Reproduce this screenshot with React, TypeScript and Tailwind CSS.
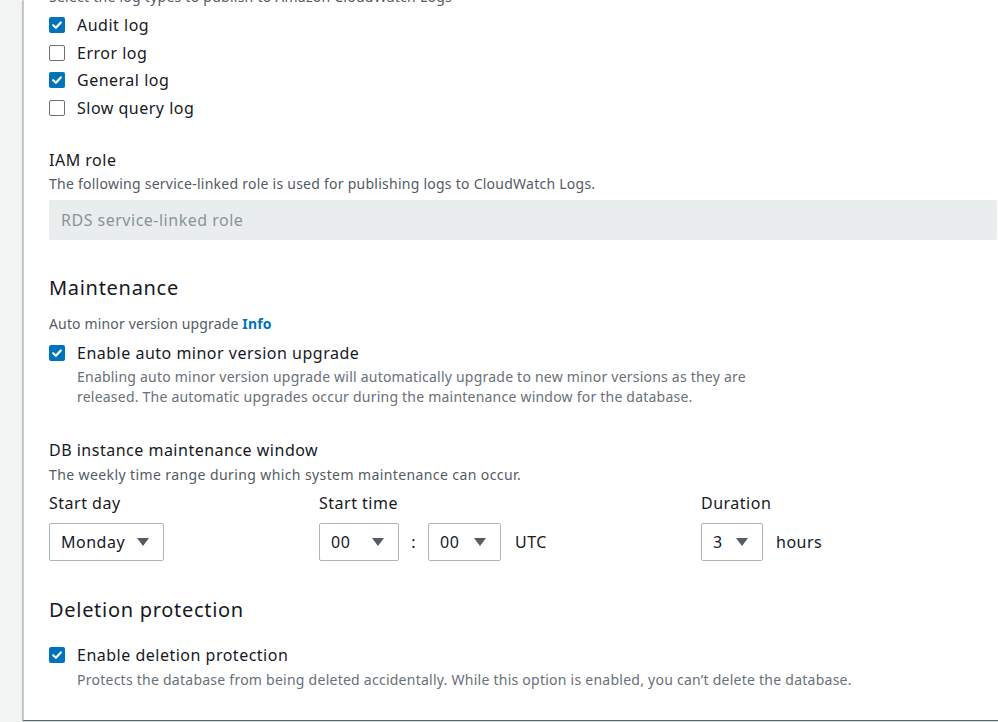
import React from "react";

const font = { fontFamily: '"Noto Sans", "Open Sans", Arial, sans-serif' };

function Check({ checked }: { checked: boolean }) {
  if (checked) {
    return (
      <span className="flex h-[16px] w-[16px] shrink-0 items-center justify-center rounded-[2px] bg-[#0073bb]">
        <svg width="12" height="12" viewBox="0 0 12 12" fill="none">
          <path d="M2.2 6.2 L4.9 8.8 L9.8 3.4" stroke="white" strokeWidth="2.2" strokeLinecap="round" strokeLinejoin="round" />
        </svg>
      </span>
    );
  }
  return <span className="h-[16px] w-[16px] shrink-0 rounded-[2px] border-[1.5px] border-[#687078] bg-white" />;
}

function Row({ checked, label }: { checked: boolean; label: string }) {
  return (
    <div className="flex h-[22px] items-center gap-[12px] text-[16px] leading-[22px] tracking-[0.5px] text-[#16191f]">
      <Check checked={checked} />
      <span>{label}</span>
    </div>
  );
}

function Triangle() {
  return (
    <svg width="12" height="8" viewBox="0 0 12 8">
      <path d="M0 0 H12 L6 8 Z" fill="#545b64" />
    </svg>
  );
}

function Select({ value, width }: { value: string; width: number }) {
  return (
    <div
      className="flex h-[38px] items-center justify-between rounded-[2px] border border-[#aab7b8] bg-white pl-[11px] pr-[14px] text-[16px] tracking-[0.5px] text-[#16191f]"
      style={{ width }}
    >
      <span>{value}</span>
      <Triangle />
    </div>
  );
}

export default function App() {
  return (
    <div className="h-[722px] w-[998px] overflow-hidden bg-[#f2f3f3]" style={font}>
      <div className="ml-[23px] flex h-[720px] w-[1010px] flex-col border-l border-[#c6cbcb] bg-white pl-[25px] shadow-[0_1px_1px_0_rgba(0,28,36,0.5),1px_1px_1px_0_rgba(0,28,36,0.15),-1px_1px_1px_0_rgba(0,28,36,0.15)]">
        <div className="mt-[-13px] text-[14px] leading-[20px] tracking-[0.25px] text-[#545b64]">
          Select the log types to publish to Amazon CloudWatch Logs
        </div>
        <div className="mt-[7px] flex flex-col gap-[5.67px]">
          <Row checked label="Audit log" />
          <Row checked={false} label="Error log" />
          <Row checked label="General log" />
          <Row checked={false} label="Slow query log" />
        </div>

        <div className="mt-[30px] text-[16px] leading-[22px] tracking-[0.5px] text-[#16191f]">IAM role</div>
        <div className="mt-[3px] text-[14px] leading-[20px] tracking-[0.25px] text-[#545b64]">
          The following service-linked role is used for publishing logs to CloudWatch Logs.
        </div>
        <div className="mt-[6px] flex h-[40px] w-[948px] items-center rounded-[2px] bg-[#eaeded] pl-[12px] text-[16px] tracking-[0.5px] text-[#879596]">
          RDS service-linked role
        </div>

        <div className="mt-[34px] text-[20px] leading-[28px] tracking-[0.7px] text-[#16191f]">Maintenance</div>
        <div className="mt-[12px] text-[14px] leading-[20px] tracking-[0.15px] text-[#545b64]">
          Auto minor version upgrade <span className="font-bold text-[#0073bb]">Info</span>
        </div>
        <div className="mt-[8px]">
          <Row checked label="Enable auto minor version upgrade" />
        </div>
        <div className="mt-[3px] max-w-[730px] pl-[28px] text-[14px] leading-[20px] tracking-[0.22px] text-[#687078]">
          Enabling auto minor version upgrade will automatically upgrade to new minor versions as they are released. The automatic upgrades occur during the maintenance window for the database.
        </div>

        <div className="mt-[32px] text-[16px] leading-[22px] tracking-[0.5px] text-[#16191f]">DB instance maintenance window</div>
        <div className="mt-[4px] text-[14px] leading-[20px] tracking-[0.4px] text-[#545b64]">
          The weekly time range during which system maintenance can occur.
        </div>
        <div className="mt-[7px] flex">
          <div className="flex w-[270px] flex-col gap-[9px]">
            <div className="text-[16px] leading-[22px] tracking-[0.5px] text-[#16191f]">Start day</div>
            <Select value="Monday" width={115} />
          </div>
          <div className="flex w-[382px] flex-col gap-[9px]">
            <div className="text-[16px] leading-[22px] tracking-[0.5px] text-[#16191f]">Start time</div>
            <div className="flex items-center">
              <Select value="00" width={80} />
              <span className="w-[29px] text-center text-[16px] text-[#16191f]">:</span>
              <Select value="00" width={73} />
              <span className="ml-[14px] text-[16px] tracking-[0.5px] text-[#16191f]">UTC</span>
            </div>
          </div>
          <div className="flex flex-col gap-[9px]">
            <div className="text-[16px] leading-[22px] tracking-[0.5px] text-[#16191f]">Duration</div>
            <div className="flex items-center">
              <Select value="3" width={62} />
              <span className="ml-[13px] text-[16px] tracking-[0.5px] text-[#16191f]">hours</span>
            </div>
          </div>
        </div>

        <div className="mt-[35px] text-[20px] leading-[28px] tracking-[0.7px] text-[#16191f]">Deletion protection</div>
        <div className="mt-[20px]">
          <Row checked label="Enable deletion protection" />
        </div>
        <div className="mt-[4px] pl-[28px] text-[14px] leading-[20px] tracking-[0.25px] text-[#687078]">
          Protects the database from being deleted accidentally. While this option is enabled, you can’t delete the database.
        </div>
      </div>
    </div>
  );
}
